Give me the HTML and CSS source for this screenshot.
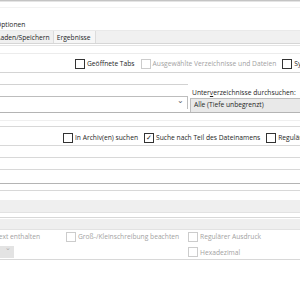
FILE: index.html
```html
<!DOCTYPE html>
<html>
<head>
<meta charset="utf-8">
<title>Suchen</title>
<link rel="stylesheet" href="styles.css">
</head>
<body>
<div class="dialog">
	<div class="topLine"></div>
	<div class="header">
		<div class="faint"></div>
		<div class="title">Optionen</div>
	</div>
	<div class="tabStrip">
		<span class="tab">Laden/Speichern</span>
		<span class="tab current">Ergebnisse</span>
	</div>
	<div class="tabEdge"></div>

	<div class="pane">
		<div class="gap7"></div>
		<div class="line light"></div>

		<div class="checkRow rowOne">
			<label class="check"><span class="box"></span>Geöffnete Tabs</label>
			<label class="check off"><span class="box"></span>Ausgewählte Verzeichnisse und Dateien</label>
			<label class="check"><span class="box"></span>Symbolische Links folgen</label>
		</div>

		<div class="pathGrid">
			<div class="pathLeft">
				<div class="field"></div>
				<div class="field plain"></div>
				<div class="combo"><span class="chev">&#8964;</span></div>
			</div>
			<div class="pathRight">
				<div class="label">Unter<u>v</u>erzeichnisse durchsuchen:</div>
				<div class="combo gray">Alle (Tiefe unbegrenzt)</div>
			</div>
		</div>
		<div class="line dark"></div>
		<div class="gap7"></div>
		<div class="line faintLine"></div>
		<div class="gap5"></div>
		<div class="line"></div>

		<div class="checkRow rowTwo">
			<label class="check"><span class="box"></span>In Archiv(en) suchen</label>
			<label class="check"><span class="box checked">&#10003;</span>Suche nach Teil des Dateinamens</label>
			<label class="check"><span class="box"></span>Regulärer Ausdruck</label>
		</div>

		<div class="line"></div>
		<div class="gap11"></div>
		<div class="line"></div>
		<div class="gap11"></div>
		<div class="line"></div>
		<div class="gap13"></div>
		<div class="line dark"></div>
		<div class="gap6"></div>
		<div class="line"></div>
		<div class="gap9"></div>
		<div class="grayField"></div>
		<div class="gap4"></div>
		<div class="line"></div>
		<div class="gap1"></div>
		<div class="grayField short"></div>

		<div class="optGrid">
			<label class="check off first"><span class="box"></span>Text enthalten</label>
			<label class="check off"><span class="box"></span>Groß-/Kleinschreibung beachten</label>
			<label class="check off"><span class="box"></span>Regulärer Ausdruck</label>
			<div class="miniCombo"><span class="chev">&#8964;</span></div>
			<div></div>
			<label class="check off lower"><span class="box"></span>Hexadezimal</label>
		</div>
		<div class="line"></div>
		<div class="bottomSpace"></div>
		<div class="line bottom"></div>
	</div>
</div>
</body>
</html>
```

FILE: styles.css
```css
body {
	margin: 0;
	background: #ffffff;
	font-family: "Open Sans", "Noto Sans", sans-serif;
	font-size: 6.7px;
	color: #1e1e1e;
}

.dialog {
	width: 300px;
	height: 300px;
	overflow: hidden;
}

.topLine {
	height: 1px;
	background: #c4c4c4;
	border-bottom: 1px solid #e4e4e4;
}

.header {
	height: 28px;
	display: flex;
	flex-direction: column;
}

.faint {
	height: 1px;
	margin-top: 5px;
	background: #f3f3f3;
}

.title {
	margin-top: auto;
	margin-left: -4px;
	line-height: 10px;
	padding-bottom: 0;
}

.tabStrip {
	height: 12px;
	background: #f0f0f0;
	border-top: 1px solid #e9e9e9;
	border-bottom: 1px solid #d6d6d6;
	display: flex;
	margin-left: -5px;
}

.tab {
	line-height: 13px;
	padding: 0 3px 0 2px;
	border-right: 1px solid #dcdcdc;
}

.tab.current {
	background: #f6f6f6;
	padding: 0 4px 0 3px;
}

.tabEdge {
	height: 1px;
	margin-top: 1px;
	background: #e4e4e4;
}

.line {
	height: 1px;
	background: #d8d8d8;
}

.line.light { background: #ececec; }
.line.faintLine { background: #efefef; }
.line.dark { background: #b4b4b4; }
.line.bottom { background: #dedede; height: 2px; }

.gap1 { height: 1px; }
.gap4 { height: 4px; }
.gap5 { height: 5px; }
.gap6 { height: 6px; }
.gap7 { height: 7px; }
.gap9 { height: 9px; }
.gap11 { height: 11px; }
.gap13 { height: 13px; }

.checkRow {
	display: flex;
	align-items: center;
	white-space: nowrap;
	border-bottom: 1px solid #d4d4d4;
}

.rowOne {
	height: 17px;
	padding: 1px 0 0 75px;
	gap: 6px;
}

.rowTwo {
	height: 18px;
	padding: 3px 0 0 63px;
	box-sizing: border-box;
	gap: 6px;
	border-bottom: none;
}

.check {
	display: flex;
	align-items: center;
	gap: 2px;
	white-space: nowrap;
}

.box {
	width: 8px;
	height: 8px;
	border: 1px solid #333333;
	background: #ffffff;
	font-size: 7px;
	line-height: 8px;
	text-align: center;
	color: #222222;
	flex: none;
}

.check.off {
	color: #a2a2a2;
}

.check.off .box {
	border-color: #cccccc;
}

.pathGrid {
	display: grid;
	grid-template-columns: 188px 1fr;
	gap: 2px;
}

.field {
	height: 11px;
	border-bottom: 1px solid #d2d2d2;
}

.field.plain {
	border-bottom: none;
}

.combo {
	height: 12px;
	border: 1px solid #bdbdbd;
	border-left: none;
	border-bottom: none;
	position: relative;
	line-height: 12px;
	padding-left: 3px;
}

.combo .chev {
	position: absolute;
	right: 3px;
	top: -3px;
	color: #666666;
	font-size: 8px;
}

.pathRight {
	display: flex;
	flex-direction: column;
	padding-top: 16px;
}

.label {
	line-height: 8px;
	padding-left: 2px;
	white-space: nowrap;
}

.label u {
	text-decoration-thickness: 0.5px;
}

.combo.gray {
	margin-top: 1px;
	height: 13px;
	background: #e9e9e9;
	border-left: 1px solid #bdbdbd;
	border-right: none;
	white-space: nowrap;
	padding-left: 3px;
}

.grayField {
	height: 12px;
	background: #efefef;
	border-bottom: 1px solid #e2e2e2;
}

.grayField.short { height: 10px; }

.optGrid {
	display: grid;
	grid-template-columns: 64px 124px 1fr;
	grid-template-rows: 13px 16px;
	align-items: center;
}

.optGrid .first {
	margin-left: -17px;
}

.optGrid .check:nth-child(2) {
	margin-left: 2px;
}

.optGrid .lower {
	align-self: end;
	padding-bottom: 2px;
}

.miniCombo {
	width: 14px;
	height: 12px;
	margin-top: 3px;
	background: #e3e3e3;
	position: relative;
	align-self: start;
}

.miniCombo .chev {
	position: absolute;
	left: 5px;
	top: -3px;
	color: #aaaaaa;
	font-size: 7px;
}

.bottomSpace {
	height: 40px;
}
```
